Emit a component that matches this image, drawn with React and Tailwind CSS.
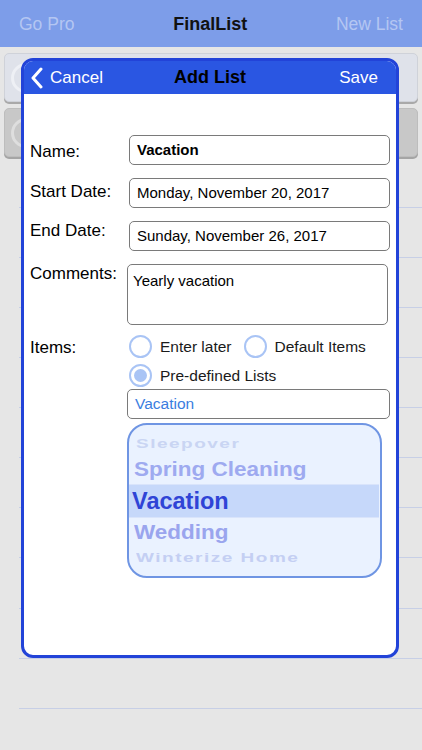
import React from "react";

const font = { fontFamily: '"Liberation Sans", Arial, sans-serif' };

function Radio({ checked, label }) {
  return (
    <div className="flex items-center gap-[8px]">
      <div className="w-[23px] h-[23px] rounded-full border-[2.5px] border-[#a9c4f5] flex items-center justify-center">
        {checked && <div className="w-[13px] h-[13px] rounded-full bg-[#a9c4f5]" />}
      </div>
      <span className="text-[15.5px] text-[#1a1a1a]">{label}</span>
    </div>
  );
}

function Field({ label, children, labelClass = "pt-[4px]" }) {
  return (
    <div className="flex items-start">
      <div className={`w-[99px] text-[17px] text-black ${labelClass}`}>{label}</div>
      <div className="flex-1">{children}</div>
    </div>
  );
}

export default function App() {
  const lines = [208, 258, 308, 358, 408, 458, 508, 558, 609, 659, 709];

  return (
    <div className="relative w-[422px] h-[750px] overflow-hidden bg-[#e6e6e6]" style={font}>
      {/* NAV BAR */}
      <div className="h-[47px] bg-[#7d9de9] flex items-center justify-between px-[19px] pt-[2px] text-[17.5px]">
        <span className="text-[#b4c6f2]">Go Pro</span>
        <span className="font-bold text-[#111] text-[18px] ml-[10px]">FinalList</span>
        <span className="text-[#b4c6f2]">New List</span>
      </div>

      {/* LIST BEHIND */}
      <div className="px-[4px] pt-[6px] flex flex-col gap-[6px]">
        <div className="h-[49px] rounded-[5px] bg-[#dfe2ea] border border-[#cfd2d9] shadow-[0_2px_0_#a9a9a9] flex items-center pl-[6px]">
          <div className="w-[30px] h-[30px] rounded-full border-[3px] border-[#eef0f5]" />
        </div>
        <div className="h-[49px] rounded-[5px] bg-[#c8c8c8] border border-[#bdbdbd] shadow-[0_2px_0_#a5a5a5] flex items-center pl-[6px]">
          <div className="w-[30px] h-[30px] rounded-full border-[3px] border-[#dedede]" />
        </div>
      </div>
      <div className="pl-[19px]">
        {lines.map((y, i) => (
          <div key={y} className={`h-[1px] bg-[#c7cfe6] ${i === 0 ? "mt-[50px]" : i === 8 ? "mt-[50px]" : "mt-[49px]"}`} />
        ))}
      </div>

      {/* ADD LIST MODAL */}
      <div className="absolute left-[21px] top-[58px] w-[378px] h-[600px] rounded-[12px] border-[3px] border-[#2243d8] bg-white overflow-hidden">
        <div className="h-[33px] bg-[#2a56e2] grid grid-cols-3 items-center px-[6px] text-[17px]">
          <div className="flex items-center gap-[6px] text-white">
            <svg width="14" height="22" viewBox="0 0 14 22" fill="none">
              <path d="M11 2 L3 11 L11 20" stroke="white" strokeWidth="3" strokeLinecap="round" strokeLinejoin="round" />
            </svg>
            <span>Cancel</span>
          </div>
          <span className="font-bold text-black text-[18px] text-center whitespace-nowrap">Add List</span>
          <span className="text-white text-right mr-[12px]">Save</span>
        </div>

        <div className="pl-[6px] pr-[6px] pt-[41px] flex flex-col">
          <Field label="Name:" labelClass="pt-[4px]">
            <div className="h-[30px] rounded-[5px] border border-[#7a7a7a] flex items-center px-[7px] text-[15px] font-bold text-black">
              Vacation
            </div>
          </Field>
          <div className="mt-[13px]">
            <Field label="Start Date:" labelClass="pt-[1px]">
              <div className="h-[30px] rounded-[5px] border border-[#7a7a7a] flex items-center px-[7px] text-[15px] text-black">
                Monday, November 20, 2017
              </div>
            </Field>
          </div>
          <div className="mt-[13px]">
            <Field label="End Date:" labelClass="-mt-[3px]">
              <div className="h-[30px] rounded-[5px] border border-[#7a7a7a] flex items-center px-[7px] text-[15px] text-black">
                Sunday, November 26, 2017
              </div>
            </Field>
          </div>
          <div className="mt-[13px]">
            <Field label="Comments:" labelClass="-mt-[3px]">
              <div className="h-[61px] -ml-[2px] mr-[2px] rounded-[5px] border border-[#7a7a7a] px-[5px] pt-[5px] text-[15px] text-black">
                Yearly vacation
              </div>
            </Field>
          </div>
          <div className="mt-[10px]">
            <Field label="Items:" labelClass="pt-[0px]">
              <div className="flex flex-col">
                <div className="flex items-center gap-[12px]">
                  <Radio label="Enter later" />
                  <Radio label="Default Items" />
                </div>
                <div className="mt-[6px]">
                  <Radio checked label="Pre-defined Lists" />
                </div>
                <div className="mt-[1px] -ml-[2px] h-[30px] rounded-[5px] border border-[#7a7a7a] flex items-center px-[7px] text-[15.5px] text-[#3a7de0]">
                  Vacation
                </div>
                {/* PICKER WHEEL */}
                <div className="mt-[4px] -ml-[2px] w-[255px] h-[155px] rounded-[20px] border-2 border-[#6f95e3] bg-[#eaf2ff] overflow-hidden flex flex-col font-bold pt-[8px]">
                  <div className="h-[22px] pl-[7px] text-[19px] leading-[22px] text-[#c9d5f3] tracking-[1.5px] scale-y-[0.65]">
                    Sleepover
                  </div>
                  <div className="h-[29px] pl-[5px] text-[22.5px] leading-[29px] text-[#9eaaf0] scale-y-[0.92]">
                    Spring Cleaning
                  </div>
                  <div className="h-[34px] mr-[1px] bg-[#c6d8fa] border-y border-[#d9e4fb] pl-[3px] text-[23.5px] leading-[32px] text-[#2f44d6]">
                    Vacation
                  </div>
                  <div className="h-[30px] pl-[5px] text-[22.5px] leading-[30px] text-[#9aa5ee] scale-y-[0.92]">
                    Wedding
                  </div>
                  <div className="h-[20px] pl-[7px] text-[19px] leading-[20px] text-[#c4cff3] tracking-[1.5px] scale-y-[0.65]">
                    Winterize Home
                  </div>
                </div>
              </div>
            </Field>
          </div>
        </div>
      </div>
    </div>
  );
}
